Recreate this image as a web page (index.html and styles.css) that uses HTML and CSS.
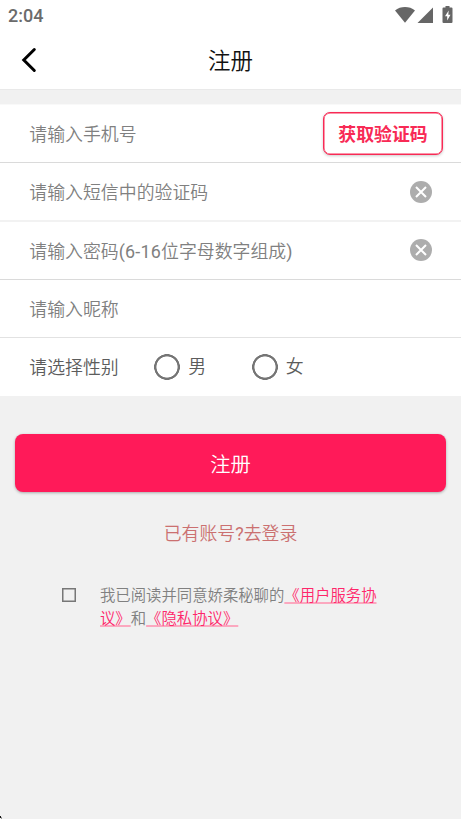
FILE: index.html
```html
<!DOCTYPE html>
<html lang="zh-CN">
<head>
<meta charset="utf-8">
<meta name="viewport" content="width=device-width, initial-scale=1">
<title>注册</title>
<link rel="stylesheet" href="styles.css">
</head>
<body>
<header class="header">
  <div class="status">
    <span class="time">2:04</span>
    <svg class="status-icons" width="60" height="20" viewBox="0 0 60 20" fill="#666">
      <path d="M0 4.500C5.500-.1 14.500-.1 20 4.500L10 16.700Z"/>
      <path d="M38 1.500V17H22.500Z"/>
      <path fill-rule="evenodd" d="M50.500 0h4v1.500h2q1 0 1 1v13.500q0 1-1 1h-8q-1 0-1-1v-13.500q0-1 1-1h2ZM53.700 4.500 50 10.200h2.200v4.300L55.500 8.700h-2.200Z"/>
    </svg>
  </div>
  <div class="navbar">
    <svg class="back" width="18" height="26" viewBox="0 0 18 26"><path d="M14.300 2.500 3.800 13 14.300 23.500"/></svg>
    <h1 class="title">注册</h1>
  </div>
</header>
<main>
  <form class="form">
    <div class="row row-phone"><span class="hint">请输入手机号</span><button type="button" class="code-button">获取验证码</button></div>
    <div class="row row-soft"><span class="hint">请输入短信中的验证码</span>
      <svg class="clear" width="22" height="22" viewBox="0 0 22 22"><circle cx="11" cy="11" r="11"/><path d="m6 6 10 10m0-10-10 10"/></svg></div>
    <div class="row row-password"><span class="hint">请输入密码<span class="latin range">(6-16</span>位字母数字组成<span class="latin">)</span></span>
      <svg class="clear" width="22" height="22" viewBox="0 0 22 22"><circle cx="11" cy="11" r="11"/><path d="m6 6 10 10m0-10-10 10"/></svg></div>
    <div class="row row-name"><span class="hint">请输入昵称</span></div>
    <div class="row row-gender"><span class="label">请选择性别</span>
      <span class="option"><i class="radio"></i>男</span>
      <span class="option"><i class="radio"></i>女</span></div>
  </form>
  <button type="button" class="submit">注册</button>
  <div class="login">已有账号<span class="latin">?</span>去登录</div>
  <div class="terms">
    <i class="checkbox"></i>
    <p class="terms-text">我已阅读并同意娇柔秘聊的<span class="link">《用户服务协<br>议》</span>和<span class="link">《隐私协议》</span></p>
  </div>
</main>
<div class="corner"></div>
</body>
</html>
```
FILE: styles.css
```css
* { box-sizing: border-box; }
body {
  margin: 0;
  height: 819px;
  overflow: hidden;
  background: #f1f1f1;
  font-family: Roboto, "Noto Sans CJK SC", sans-serif;
  font-size: 17.9px;
  font-weight: 350;
}
button { border: 0; padding: 0; font-family: inherit; }
.latin { font-weight: 400; }
.header { height: 90px; background: #fff; border-bottom: 1px solid #e9e9e9; }
.status { height: 30px; display: flex; justify-content: space-between; padding: 6px 6px 0 8px; }
.time { font-size: 18px; line-height: 20px; color: #6b6b6b; font-weight: 500; }
.status-icons { display: block; }
.navbar { height: 60px; display: grid; grid-template-columns: 60px 1fr 60px; align-items: center; }
.back { margin-left: 20px; fill: none; stroke: #000; stroke-width: 3; stroke-linecap: round; stroke-linejoin: miter; }
.title { margin: 0; padding-top: 2px; text-align: center; font-size: 22.5px; line-height: 30px; font-weight: 350; color: #111; }
.form { margin-top: 15px; background: #fff; box-shadow: 0 -1px #f9f9f9; }
.row { height: 58px; display: flex; align-items: center; padding: 0 29px 0 29.3px; border-bottom: 1px solid #dadada; }
.row-phone { padding-right: 18px; }
.row-soft { border-bottom: 2px solid #f2f2f2; height: 59px; }
.row-password .clear { margin-bottom: 2px; }
.row-name { border-color: #e2e2e2; }
.row-gender { border: 0; }
.hint { flex: 1; color: #808080; padding-bottom: 2px; }
.range { letter-spacing: .2px; }
.label { width: 125px; color: #5c5c5c; padding-bottom: 2px; }
.code-button {
  width: 120px; height: 43px; padding-bottom: 1px;
  border: 1px solid #f82a55; border-radius: 7px;
  background: #fff; color: #f82a55;
  font-size: 17.9px; font-weight: 700;
  box-shadow: 0 1px 3px rgba(0,0,0,.2), inset 0 0 0 .5px #f82a55;
}
.clear { fill: #adadad; }
.clear path { stroke: #fff; stroke-width: 2; }
.option { width: 97.4px; display: flex; align-items: center; gap: 8px; color: #5c5c5c; line-height: 24px; padding-bottom: 1px; }
.radio { width: 26px; height: 26px; background: radial-gradient(circle, transparent 10.2px, #757575 10.9px, #757575 12.6px, transparent 13.1px); }
.submit {
  display: block; width: 431px; height: 58px; margin: 38px 0 0 15px; padding-bottom: 1px;
  border-radius: 8px; background: #ff1a59; color: #fff;
  font-size: 20.3px; font-weight: 350; box-shadow: 0 1px 3px rgba(0,0,0,.3);
}
.login { margin-top: 29px; text-align: center; line-height: 26px; color: #cb7070; }
.terms { display: flex; margin-top: 37px; padding-left: 62px; }
.checkbox { width: 14px; height: 14px; margin-top: 4px; border: 1px solid #777; box-shadow: inset 0 0 0 .5px #777; }
.terms-text { margin: 1px 0 0 24px; font-size: 15.36px; line-height: 23px; color: #808080; white-space: nowrap; }
.link { color: #ff266a; text-decoration: underline; text-decoration-color: #fba8bf; text-decoration-thickness: 2px; text-underline-offset: 1px; text-decoration-skip-ink: none; }
.corner { position: fixed; left: 0; bottom: 1px; width: 1px; height: 2px; background: #111; box-shadow: 1px 1px #999; }
```
